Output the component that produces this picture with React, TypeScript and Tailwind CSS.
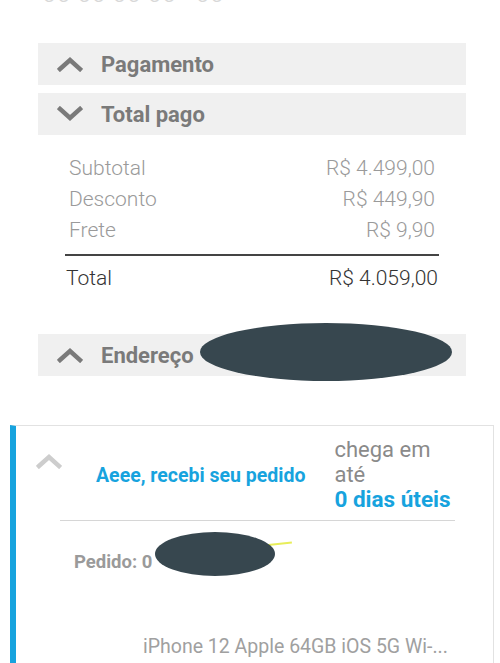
const Chevron = ({ up, className }: { up: boolean; className: string }) => (
  <svg viewBox="0 0 26 16" className={className} fill="none" stroke="currentColor" strokeWidth={4.5} strokeLinecap="square">
    {up ? <polyline points="3,13 13,4 23,13" /> : <polyline points="3,3 13,12 23,3" />}
  </svg>
);

const SectionBar = ({ title, up, children }: { title: string; up: boolean; children?: React.ReactNode }) => (
  <div className="relative flex h-[42px] items-center bg-[#f0f0f0] pl-[19px] text-[#7a7a7a]">
    <Chevron up={up} className="h-[16px] w-[26px]" />
    <span className="ml-[18px] text-[22px] font-bold">{title}</span>
    {children}
  </div>
);

const Row = ({ label, value }: { label: string; value: string }) => (
  <div className="flex justify-between text-[21px] font-light leading-[31px] text-[#9a9a9a]">
    <span>{label}</span>
    <span>{value}</span>
  </div>
);

export default function App() {
  return (
    <div className="h-[663px] overflow-hidden bg-white font-['Roboto',sans-serif]">
      <div className="pl-[38px] pr-[34px]">
        <div className="-mt-[20px] h-[26px] pl-[4px] text-[26px] font-light leading-[26px] text-[#d8d8d8]">
          00 00 00 00 · 00
        </div>
        <div className="mt-[37px] flex flex-col gap-[8px]">
          <SectionBar title="Pagamento" up />
          <SectionBar title="Total pago" up={false} />
        </div>
        <div className="px-[31px] pt-[18px]">
          <Row label="Subtotal" value="R$ 4.499,00" />
          <Row label="Desconto" value="R$ 449,90" />
          <Row label="Frete" value="R$ 9,90" />
        </div>
        <div className="mx-[27px] mt-[8px] h-[2px] bg-[#444]" />
        <div className="mx-[28px] mt-[7px] flex justify-between text-[21px] font-light leading-[31px] text-[#333]">
          <span>Total</span>
          <span>R$ 4.059,00</span>
        </div>
        <div className="mt-[40px]">
          <SectionBar title="Endereço" up>
            <div className="absolute left-[162px] top-[-11px] h-[58px] w-[252px] rounded-[50%] bg-[#37474f]" />
          </SectionBar>
        </div>
      </div>

      <div className="ml-[10px] mr-[6px] mt-[49px] border-l-[6px] border-r border-t border-l-[#17a3de] border-r-[#e2e2e2] border-t-[#e2e2e2] pb-[20px]">
        <div className="flex pl-[20px] pt-[11px]">
          <Chevron up className="mt-[16px] h-[16px] w-[26px] text-[#cdcdcd]" />
          <div className="ml-[34px] flex items-center pt-[2px] text-[19.5px] font-bold text-[#17a3de]">
            Aeee, recebi seu pedido
          </div>
          <div className="ml-[29px] text-[22px] leading-[25px] text-[#8a8a8a]">
            <div>chega em</div>
            <div>até</div>
            <div className="text-[22.5px] font-bold text-[#17a3de]">0 dias úteis</div>
          </div>
        </div>
        <div className="ml-[44px] mr-[38px] mt-[8px] h-px bg-[#d6d6d6]" />
        <div className="relative ml-[58px] mt-[29px] text-[18.5px] font-bold leading-[24px] text-[#9a9a9a]">
          Pedido: 0
          <div className="absolute left-[170px] top-[-6px] h-[2px] w-[48px] -rotate-6 bg-[#e8ee5a]" />
          <div className="absolute left-[81px] top-[-18px] h-[44px] w-[120px] rounded-[50%] bg-[#37474f]" />
        </div>
        <div className="ml-[127px] mt-[61px] text-[19.5px] leading-[24px] text-[#a0a0a0]">
          iPhone 12 Apple 64GB iOS 5G Wi-...
        </div>
      </div>
    </div>
  );
}
